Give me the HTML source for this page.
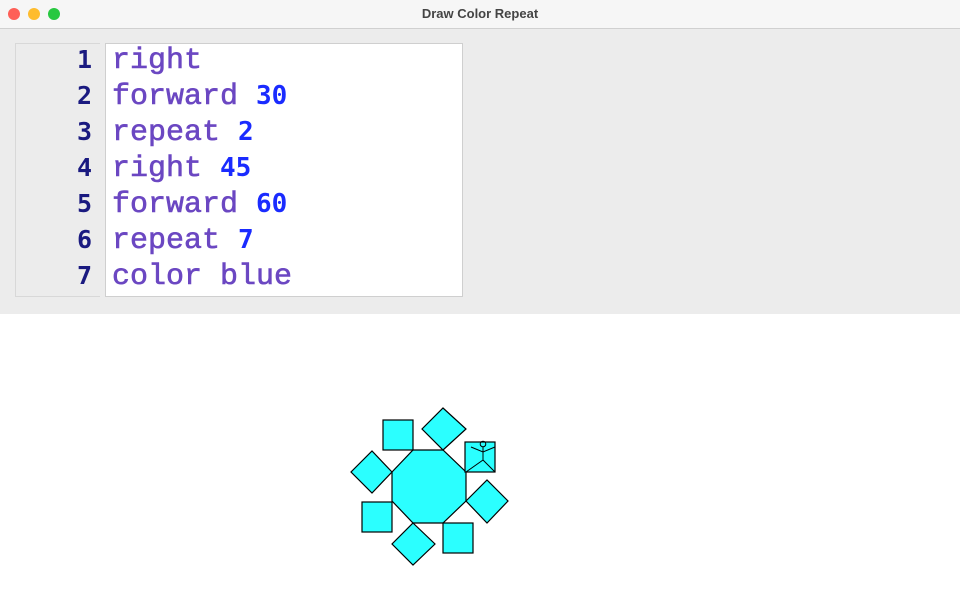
<!DOCTYPE html>
<html><head><style>
body{margin:0;width:960px;height:600px;background:#fff;position:relative;overflow:hidden;font-family:"Liberation Sans",sans-serif}
.tb{position:absolute;left:0;top:0;width:960px;height:28px;background:#f6f6f6;border-bottom:1px solid #d0d0d0;text-align:center;font-size:13px;font-weight:bold;color:#444;line-height:28px}
.dot{position:absolute;top:8px;width:12px;height:12px;border-radius:50%}
.gray{position:absolute;left:0;top:29px;width:960px;height:285px;background:#ececec}
.gut{position:absolute;left:15px;top:43px;width:84px;height:252px;border-left:1px solid #d8d8d8;border-top:1px solid #d8d8d8;border-bottom:1px solid #d8d8d8;background:#ececec}
.ln{position:absolute;right:8px;font-family:"DejaVu Sans Mono",monospace;font-size:25px;font-weight:bold;color:#1a1a80}
.code{position:absolute;left:105px;top:43px;width:356px;height:252px;background:#fff;border:1px solid #cfcfcf}
.cl{position:absolute;left:6px;font-family:"Liberation Mono",monospace;font-size:30px;color:#6b47c2;white-space:pre;-webkit-text-stroke:0.6px #6b47c2}
.n{color:#1a2bff;font-weight:bold;font-family:"DejaVu Sans Mono",monospace;font-size:26px;-webkit-text-stroke:0}
</style></head><body>
<div class="tb">Draw Color Repeat
<div class="dot" style="left:8px;background:#fe5f57"></div>
<div class="dot" style="left:28px;background:#febc2e"></div>
<div class="dot" style="left:48px;background:#28c840"></div></div>
<div class="gray"></div>
<div class="gut">
<div class="ln" style="top:1px">1</div><div class="ln" style="top:37px">2</div><div class="ln" style="top:73px">3</div><div class="ln" style="top:109px">4</div><div class="ln" style="top:145px">5</div><div class="ln" style="top:181px">6</div><div class="ln" style="top:217px">7</div>
</div>
<div class="code">
<div class="cl" style="top:0">right</div>
<div class="cl" style="top:36px">forward <span class="n">30</span></div>
<div class="cl" style="top:72px">repeat <span class="n">2</span></div>
<div class="cl" style="top:108px">right <span class="n">45</span></div>
<div class="cl" style="top:144px">forward <span class="n">60</span></div>
<div class="cl" style="top:180px">repeat <span class="n">7</span></div>
<div class="cl" style="top:216px">color blue</div>
</div>
<svg style="position:absolute;left:0;top:0" width="960" height="600">
<g fill="#2bffff" stroke="#000" stroke-width="1.2">
<polygon points="413,450 443,450 466,472 466,501 443,523 413,523 392,501 392,472"/>
<rect x="383" y="420" width="30" height="30"/>
<polygon points="443,450 466,429 443,408 422,429"/>
<rect x="465" y="442" width="30" height="30"/>
<polygon points="466,501 487,480 508,501 487,523"/>
<rect x="443" y="523" width="30" height="30"/>
<polygon points="413,523 435,544 413,565 392,544"/>
<rect x="362" y="502" width="30" height="30"/>
<polygon points="392,472 372,451 351,472 372,493"/>
</g>
<g fill="none" stroke="#000" stroke-width="1">
<circle cx="483" cy="444" r="2.8"/>
<path d="M483,447 V460 L466,472 M483,460 L495,472 M471,447 L483,452 L495,447"/>
</g>
</svg>
</body></html>
